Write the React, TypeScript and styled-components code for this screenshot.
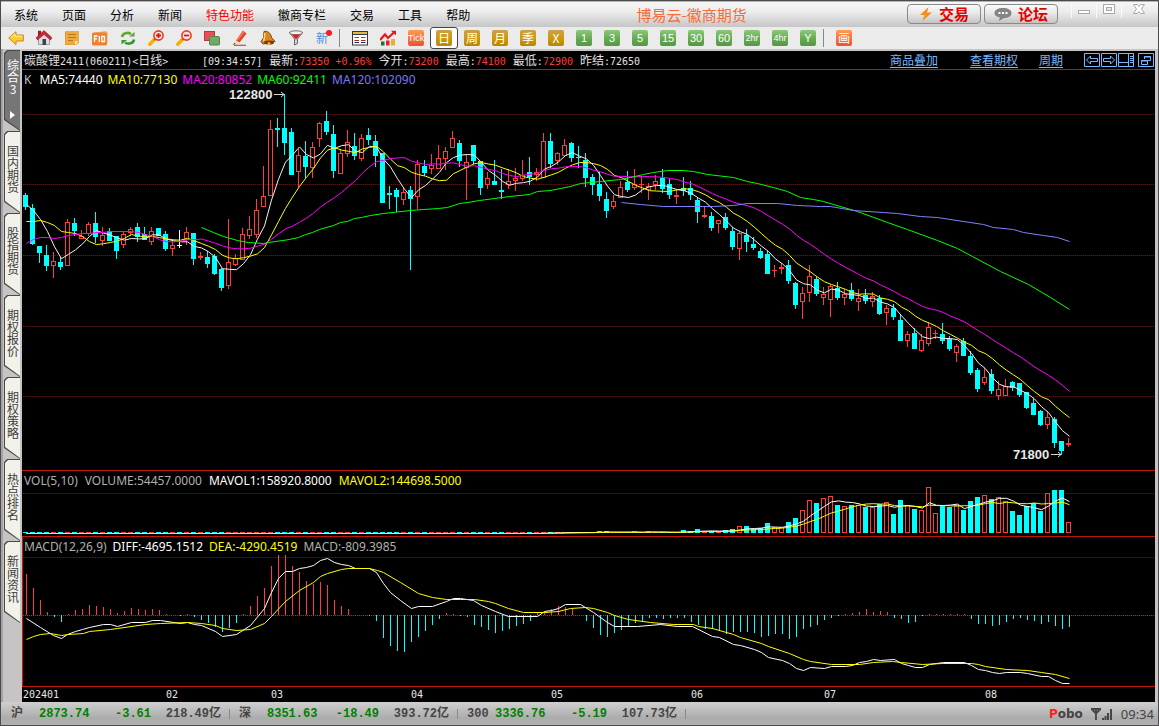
import React from "react";
import styled, { createGlobalStyle, css } from "styled-components";

const CJK = '"Noto Sans CJK SC", sans-serif';
const MONO = '"DejaVu Sans Mono", "Noto Sans CJK SC", monospace';
const RED = "#ff3c3c";
const CYAN = "#00ffff";
const RULE = "#c01808";

const Global = createGlobalStyle`
  * { box-sizing: border-box; }
  body { margin: 0; background: #c8c4c4; font: 12px/16px ${CJK}; color: #000; }
  button { font: inherit; color: inherit; border: 0; padding: 0; margin: 0; background: none; cursor: pointer; }
  a { color: inherit; }
`;

/* ---------- market data (vertical chart units) ---------- */

// kind, body top, body bottom, high, low
const CANDLES = `
c195,207,193,210 c208,244,204,245 c246,253,246,263 c255,266,245,271 r261,266,252,278 c262,267,257,270 r222,266,219,266
c223,231,218,236 r236,239,230,239 r224,234,222,236 c223,237,212,243 r235,241,227,246 c231,241,228,241 c236,251,236,259
r234,245,232,248 r229,233,227,236 c227,237,223,242 c234,240,227,240 r231,242,227,245 c228,236,228,236 c234,249,231,251
r245,249,240,256 w245,246,230,248 r232,240,227,245 c233,259,233,265 r256,258,252,260 c257,264,251,268 c256,274,254,275
c269,288,268,291 r262,286,219,289 r258,265,254,266 r234,260,228,260 r229,236,216,239 r210,235,199,238 r196,207,166,207
r129,196,120,196 c128,130,118,147 c128,143,94,155 c132,175,128,175 r155,172,149,187 c156,167,141,178 r147,168,142,178
r123,139,122,147 c121,132,111,135 c134,171,125,178 r153,174,149,174 r142,154,130,157 c146,156,133,160 r138,159,134,161
c135,140,128,145 c141,156,135,167 c153,203,153,203 c193,195,186,209 c190,197,188,212 r192,200,188,205 c190,199,186,270
r164,197,160,209 c166,173,160,176 r165,169,154,174 r158,169,145,169 r151,159,147,170 r138,148,131,148 c143,161,140,167
r162,168,155,200 c145,161,145,164 c161,188,161,195 r178,185,172,189 c181,185,160,185 c190,192,169,199 r181,185,169,189
r178,181,168,191 r175,179,160,181 c172,177,157,185 r172,175,168,181 r141,178,133,178 c141,164,133,168 r153,161,152,165
r145,156,139,156 c143,158,142,162 c157,158,146,168 c160,178,153,187 c177,185,174,195 c184,196,172,201 c199,211,192,218
r201,207,195,209 r187,198,181,198 c182,190,171,192 r184,188,169,190 r184,185,176,193 r186,190,183,200 r181,185,175,190
c178,189,169,193 c184,195,179,199 r195,197,189,204 c188,191,177,196 c188,195,181,200 c200,212,197,223 r215,217,207,218
c216,228,212,231 r220,224,220,233 c217,228,213,230 c231,247,227,250 r233,249,231,260 c235,242,229,252 c244,248,237,250
c251,258,248,259 c254,274,251,274 r270,271,265,277 r267,269,263,274 c265,281,260,284 c283,305,282,309 r293,302,287,319
r276,293,265,302 c279,294,277,296 r294,298,287,305 r286,300,284,317 c288,298,282,300 r294,298,289,305 c290,299,283,301
r298,302,289,311 c295,301,289,304 r296,302,292,307 c298,314,295,315 r308,313,305,325 c308,317,304,320 c320,341,314,341
r334,341,331,347 c333,349,328,349 r340,351,334,352 r327,344,322,346 r333,334,330,339 c334,341,323,344 c339,349,336,351
r346,353,344,362 c341,356,338,356 c356,373,351,375 c370,389,368,392 r377,383,368,385 c374,391,369,394 r389,396,381,400
r386,396,379,396 c382,388,381,391 c383,395,383,397 c392,408,392,409 c403,415,398,415 c411,425,410,426 r417,425,412,429
c419,443,417,448 c441,451,441,455 r443,445,438,447`
  .trim()
  .split(/\s+/)
  .map((s) => {
    const [top, bottom, high, low] = s.slice(1).split(",").map(Number);
    return { kind: s[0], top, bottom, high, low };
  });

// bar heights of the traded volume for the most recent bars
const VOLUME_TAIL = [
  1, 1, 1, 1, 1, 1, 1, 1, 2, 2, 1, 1, 1, 2, 1, 2, 1, 1, 1, 1, 3, 2, 4, 2, 2, 2, 3, 4, 7, 7, 4, 5, 10, 6, 6, 11, 15,
  23, 33, 30, 35, 37, 28, 27, 28, 28, 26, 26, 29, 31, 19, 33, 28, 24, 23, 46, 20, 27, 26, 28, 23, 32, 36, 38, 34, 36,
  32, 22, 18, 27, 30, 22, 40, 43, 43, 11,
];
const VOLUME = [...Array(CANDLES.length - VOLUME_TAIL.length).fill(0), ...VOLUME_TAIL];

// end of each histogram bar; the zero line is at 615
const MACD_BARS = [
  574, 588, 600, 612, 617, 622, 614, 610, 609, 605, 606, 607, 609, 613, 611, 608, 609, 610, 609, 610, 614, 615, 616,
  614, 617, 620, 623, 627, 632, 628, 623, 614, 606, 596, 588, 566, 555, 555, 566, 572, 581, 584, 582, 585, 600, 606,
  609, 615, 615, 616, 621, 638, 646, 651, 652, 642, 637, 631, 625, 619, 613, 614, 616, 617, 625, 627, 630, 633, 631,
  629, 626, 624, 621, 612, 612, 609, 606, 607, 609, 615, 621, 628, 635, 637, 633, 630, 626, 623, 621, 618, 618, 619,
  618, 618, 618, 622, 625, 629, 629, 631, 634, 632, 632, 632, 633, 637, 636, 634, 634, 639, 637, 629, 627, 625, 620,
  618, 616, 614, 613, 612, 609, 612, 611, 612, 618, 619, 623, 622, 616, 614, 614, 614, 614, 614, 614, 619, 624, 624,
  626, 625, 622, 619, 618, 620, 621, 624, 622, 626, 629, 627,
];

const DIFF =
  "26,618 40,627 53,635 61,638 67,634 75,631 82,629 89,627 103,624 110,624 117,626 131,622 145,622 152,620 160,620 180,623 187,622 194,624 201,625 215,631 222,636 236,634 250,625 264,608 271,592 278,578 285,571 292,571 299,568 306,567 313,565 320,560 327,558 334,562 341,564 348,565 355,568 369,568 376,572 383,583 390,592 400,600 411,608 418,606 432,606 446,601 453,598 460,598 473,600 481,605 495,611 508,616 537,616 544,611 551,610 558,608 565,604 580,604 593,612 607,622 614,626 637,626 660,624 677,626 692,626 712,636 719,637 733,644 740,645 754,649 761,652 768,657 782,660 789,663 796,668 803,670 810,667 824,668 831,666 845,666 852,665 859,662 866,661 873,659 880,660 894,659 901,663 908,665 915,667 922,667 929,664 943,662 964,662 971,665 978,669 985,670 992,672 999,673 1006,672 1020,672 1027,673 1041,676 1048,676 1055,680 1062,683 1069,683";
const DEA =
  "26,639 33,636 40,634 50,633 61,635 68,634 83,633 89,631 110,629 117,628 145,624 160,623 187,622 201,623 215,625 222,628 236,630 250,629 264,623 271,616 285,601 299,590 313,582 320,576 327,573 341,569 348,568 369,568 377,570 383,572 400,582 418,593 432,597 446,599 460,599 474,599 488,601 495,603 508,608 523,612 544,612 558,611 570,608 585,607 593,608 607,612 614,615 628,619 650,622 673,624 693,624 698,626 712,628 733,634 740,637 761,643 768,646 789,653 803,659 810,661 831,664 859,664 873,662 892,661 901,662 922,664 942,663 971,663 978,664 985,666 1006,669 1027,670 1041,672 1055,674 1069,678";
const MA60 =
  "201,227 213,232 223,236 237,240 248,242 263,243 268,242 289,239 298,237 305,234 312,232 319,229 333,225 340,222 347,221 354,218 361,217 370,215 383,213 410,210 423,209 438,208 447,207 459,203 467,202 479,200 494,198 509,196 529,194 537,191 550,190 560,188 570,186 580,183 600,181 620,179 630,177 643,174 653,172 667,170 683,170 693,171 707,174 733,177 747,181 757,183 773,187 787,191 800,197 813,199 823,201 833,204 857,211 887,222 907,229 937,240 957,248 972,256 1000,271 1028,284 1050,297 1069,309";
const MA120 =
  "621,202 640,204 663,206 713,206 733,205 747,203 777,203 797,205 820,206 830,206 853,210 897,213 920,216 937,217 963,221 983,224 993,227 1013,229 1023,232 1043,235 1057,237 1069,241";

const CLOSES = CANDLES.map((c) => (c.kind === "c" ? c.bottom : c.top));

// moving average; `lead` holds the values of the bars before a full window exists
const average = (values: number[], n: number, lead: number[] = []) =>
  values.map((_, i) => {
    if (i < n - 1) return lead[i] ?? values[i];
    return values.slice(i - n + 1, i + 1).reduce((a, b) => a + b, 0) / n;
  });

const toPoints = (values: number[]) => values.map((v, i) => `${26 + i * 7},${v.toFixed(1)}`).join(" ");

const MA5 = toPoints(average(CLOSES, 5, [204, 210, 219, 231]));
const MA10 = toPoints(average(CLOSES, 10, [221, 221, 220, 222, 225, 231, 232, 233, 236]));
const MA20 = toPoints(
  average(CLOSES, 20, [243, 239, 237, 237, 238, 237, 235, 234, 233, 233, 232, 232, 231, 231, 231, 231, 232, 234, 236])
);
const volumeLine = (n: number) => toPoints(average(VOLUME, n, VOLUME.slice(0, n)).map((v) => 533 - v));

/* ---------- frame ---------- */

const Shell = styled.div`
  border: 1px solid #4c4a4c;
  background: #c8c4c4;
  overflow: hidden;
`;

const TitleBar = styled.header`
  display: grid;
  grid-template-columns: auto 1fr auto;
  align-items: center;
  height: 26px;
  border-top: 1px solid #b4b4b4;
  background: linear-gradient(#f6f6f6, #ececec 40%, #c6c6c6);
`;

const Menu = styled.nav`
  display: flex;
  gap: 24px;
  padding-left: 13px;
`;

const MenuButton = styled.button<{ $hot?: boolean }>`
  white-space: nowrap;
  line-height: 18px;
  color: ${(p) => (p.$hot ? "#ff0000" : "#000")};
`;

const AppName = styled.h1`
  margin: 0 0 0 6px;
  font-size: 15px;
  line-height: 20px;
  font-weight: 400;
  color: #f26c3c;
  text-align: center;
  white-space: nowrap;
`;

const TitleTools = styled.div`
  display: flex;
  align-self: start;
  gap: 3px;
  padding-right: 3px;
`;

const PillButton = styled.button`
  display: flex;
  align-items: center;
  justify-content: center;
  gap: 6px;
  width: 74px;
  height: 20px;
  margin-top: 2px;
  border: 1px solid #8a8a8a;
  border-radius: 4px;
  background: linear-gradient(#fafafa, #e8e8e8 45%, #c4c4c4);
  color: #e00000;
  font-size: 15px;
  line-height: 18px;
  font-weight: 700;
`;

const WindowButtons = styled.div`
  display: flex;
  margin-left: 10px;
`;

const WindowButton = styled.button<{ $wide?: boolean }>`
  display: grid;
  place-items: center;
  width: ${(p) => (p.$wide ? 34 : 25)}px;
  height: 16px;
  padding-bottom: 2px;
  border-left: 1px solid #fafafa;
`;

const ToolBar = styled.div`
  display: flex;
  align-items: center;
  height: 22px;
  padding-left: 1px;
  background: #ebebeb;
`;

const ToolButton = styled.button<{ $active?: boolean }>`
  display: grid;
  place-items: center;
  width: 28px;
  height: 22px;
  ${(p) =>
    p.$active &&
    css`
      border: 1px solid #444;
      border-radius: 3px;
      background: #fff;
    `}
`;

const Divider = styled.span`
  flex: none;
  width: 8px;
  height: 18px;
  background: linear-gradient(#888, #888) 1px 0 / 1px 100% no-repeat;
`;

type Tone = "gold" | "green" | "orange";
const TONES: Record<Tone, string> = {
  gold: "linear-gradient(#c8a050, #d09a08 50%, #b88600)",
  green: "linear-gradient(#8cc878, #62a850 60%, #559845)",
  orange: "linear-gradient(#ff9c50, #f0502c)",
};

const Tile = styled.span<{ $tone: Tone; $small?: boolean }>`
  display: grid;
  place-items: center;
  width: 16px;
  height: 16px;
  border-radius: 2px;
  background: ${(p) => TONES[p.$tone]};
  color: #fff;
  font: ${(p) =>
    p.$small
      ? '9px/16px "Liberation Sans", sans-serif'
      : p.$tone === "green"
        ? '11px/16px "Liberation Sans", sans-serif'
        : `12px/16px ${CJK}`};
`;

const Workspace = styled.main`
  display: flex;
  padding: 2px 3px 0 0;
  border-left: 2px solid #a4a2a4;
`;

/* ---------- side tabs ---------- */

const SideTabs = styled.nav`
  display: flex;
  flex-direction: column;
  flex: none;
  width: 19px;
  margin-top: -1px;
  padding-left: 1px;
  padding-right: 2px;
`;

const tabShape = "polygon(0 3px, 3px 0, 100% 0, 100% 100%, 0 calc(100% - 11px))";

const SideTab = styled.button<{ $active?: boolean }>`
  position: relative;
  z-index: 0;
  display: flex;
  flex-direction: column;
  align-items: center;
  gap: 16px;
  height: ${(p) => (p.$active ? 81 : 82)}px;
  padding: ${(p) => (p.$active ? "9px 0 0 1px" : "14px 0 0 1px")};
  clip-path: ${tabShape};
  background: #484848;
  color: ${(p) => (p.$active ? "#fff" : "#3c3c3c")};
  &::before {
    content: "";
    position: absolute;
    z-index: -1;
    inset: 1px 0 1px 1px;
    clip-path: ${tabShape};
    background: ${(p) => (p.$active ? "#767676" : "#f2f1ea")};
  }
`;

const TabText = styled.span`
  writing-mode: vertical-rl;
  text-orientation: upright;
  font-size: 12px;
  line-height: 14px;
`;

const TabArrow = styled.span`
  border: 4px solid transparent;
  border-left: 5px solid #fff;
  border-right: 0;
`;

/* ---------- chart area ---------- */

const Charts = styled.section`
  flex: 1;
  min-width: 0;
  background: #000;
  color: #e0e0e0;
`;

const QuoteBar = styled.div`
  display: flex;
  align-items: center;
  justify-content: space-between;
  height: 19px;
  padding: 0 1px 0 2px;
  border-bottom: 1px solid ${RULE};
  white-space: nowrap;
`;

const Figures = styled.div`
  display: flex;
  align-items: baseline;
  gap: 7px;
  line-height: 18px;
`;

const Instrument = styled.span`
  width: 171px;
`;

const Num = styled.span<{ $up?: boolean }>`
  font: 10px/16px ${MONO};
  color: ${(p) => (p.$up ? RED : "inherit")};
`;

const Links = styled.div`
  display: flex;
  align-items: center;
  color: #78b8ff;
`;

const TextLink = styled.a<{ $gap: number }>`
  margin-right: ${(p) => p.$gap}px;
  text-underline-offset: 2px;
`;

const PaneButton = styled.button<{ $apart?: boolean }>`
  display: block;
  width: 16px;
  height: 14px;
  margin-left: ${(p) => (p.$apart ? 4 : 1)}px;
`;

const Panel = styled.div<{ $edge?: boolean }>`
  border-bottom: 1px solid ${RULE};
  box-shadow: ${(p) => (p.$edge ? `inset 1px 0 ${RULE}` : "none")};
`;

const Legend = styled.div<{ $height: number; $gap: number }>`
  display: flex;
  gap: ${(p) => p.$gap}px;
  height: ${(p) => p.$height}px;
  padding-left: 2px;
  font: 12px/20px "Noto Sans", sans-serif;
  white-space: nowrap;
`;

const LegendItem = styled.span<{ $color: string }>`
  color: ${(p) => p.$color};
`;

const Plot = styled.svg`
  display: block;
  width: 100%;
  text {
    fill: #e8e8e8;
  }
`;

/* ---------- status bar ---------- */

const StatusBar = styled.footer`
  display: flex;
  align-items: center;
  justify-content: space-between;
  height: 23px;
  padding: 1px 4px 0 10px;
  background: linear-gradient(#cfcfcf, #acacac 70%, #b0b0b0);
  color: #444;
`;

const Indices = styled.div`
  display: flex;
`;

const Index = styled.div`
  display: grid;
  grid-template-columns: 28px 49px 63px 70px;
  align-items: center;
  width: 228px;
  font: 700 12px/20px "Liberation Mono", "Noto Sans CJK SC", monospace;
  background: linear-gradient(#888, #888) 218px 5px / 1px 10px no-repeat;
`;

const IndexCell = styled.span<{ $down?: boolean; $right?: boolean }>`
  color: ${(p) => (p.$down ? "#008000" : "inherit")};
  text-align: ${(p) => (p.$right ? "right" : "left")};
`;

const StatusRight = styled.div`
  display: flex;
  align-items: center;
  gap: 8px;
  font: 13px/20px "Noto Sans", sans-serif;
`;

const Brand = styled.b`
  font: 700 12px/20px "DejaVu Sans", sans-serif;
  span {
    color: #ff2020;
  }
`;

/* ---------- drawings ---------- */

const Icon = ({ children, w = 16, h = 16 }: { children: React.ReactNode; w?: number; h?: number }) => (
  <svg width={w} height={h} viewBox={`0 0 ${w} ${h}`} aria-hidden="true">
    {children}
  </svg>
);

const Lens = ({ plus }: { plus?: boolean }) => (
  <Icon>
    <path d="M1.800 14.200 6 10" stroke="#f8b000" strokeWidth="3.600" strokeLinecap="round" />
    <path d="M6 10l1.600-1.600" stroke="#e05030" strokeWidth="2" />
    <circle cx="10.500" cy="5.500" r="4.600" fill="#ffe8e0" stroke="#e83c28" strokeWidth="1.600" />
    <path d={plus ? "M8 5.500h5M10.500 3v5" : "M8 5.500h5"} stroke="#d81818" strokeWidth="1.800" />
  </Icon>
);

const leftTools: [string, React.ReactNode][] = [
  [
    "后退",
    <Icon>
      <path d="M.7 8 8 1.700V5h7.300v6H8v3.600z" fill="#ffcc30" stroke="#c88a10" />
      <path d="M3 7.500 7 4v2.200h7" stroke="#fff0a0" fill="none" />
    </Icon>,
  ],
  [
    "首页",
    <Icon>
      <path d="M2.500 8v6.500h11V8L8 3.500z" fill="#dcdce2" stroke="#9a9aa2" />
      <path d="M2 .8h3v5H2z" fill="#a01818" />
      <path d="M8 .5 16 7.700 14.500 10 8 4.500 1.500 10 0 7.700z" fill="#c82838" stroke="#901020" strokeWidth=".5" />
      <path d="M6.500 9h3.500v6H6.500z" fill="#404048" />
    </Icon>,
  ],
  [
    "资讯",
    <Icon>
      <path d="M2 1h13v11.500L12 15H1V2z" fill="#dc9020" />
      <path d="M2 1h13v10l-3 3.500H1z" fill="#eeaa40" />
      <path d="M4 4.500h8M4 7.500h8M4 10.500h5" stroke="#b87818" />
      <path d="M11 15v-3.500h3.500z" fill="#fff0c0" />
    </Icon>,
  ],
  [
    "F10",
    <Icon>
      <path d="M1 3l12-2 2.500 1v11l-13 2z" fill="#f0b070" />
      <rect y="2.500" width="15" height="13" rx="1.500" fill="#f08030" />
      <path d="M2.500 12V6h3M2.500 8.800h2.500M7.300 6v6M9.800 6.500h2.700v5H9.800z" stroke="#fff" strokeWidth="1.300" fill="none" />
    </Icon>,
  ],
  [
    "刷新",
    <Icon>
      <path d="M2 7C2.500 2.800 8 2 11 4" fill="none" stroke="#60a830" strokeWidth="2.600" />
      <path d="M9 6.500h5.500V2z" fill="#60a830" />
      <path d="M14 9.500c-.5 4.200-6 5-9 3" fill="none" stroke="#389838" strokeWidth="2.600" />
      <path d="M7 10H1.500v4.500z" fill="#389838" />
    </Icon>,
  ],
  ["放大", <Lens plus />],
  ["缩小", <Lens />],
  [
    "叠加",
    <Icon>
      <rect x=".5" y="1.500" width="10" height="9" fill="#e85058" stroke="#b83840" />
      <rect x="5.500" y="6.500" width="10" height="8.500" rx="1" fill="#70a868" stroke="#508848" />
    </Icon>,
  ],
  [
    "画笔",
    <Icon>
      <path d="M4 10.500 11 .5 14.500 3.500 7.500 12.500z" fill="#e84020" />
      <path d="M5.500 10 12 1.500" stroke="#ff9080" strokeWidth="1.200" />
      <path d="M4 10.500 1 15 7.500 12.500z" fill="#f8d8a0" />
      <path d="M1 15l1.200-2 1.500 1z" fill="#403020" />
      <path d="M2 15.300h12" stroke="#e04030" strokeWidth="1.200" />
    </Icon>,
  ],
  [
    "预警",
    <Icon>
      <path d="M4 1.500C7 .5 11 3 11.500 7.500L15 11.500 3 14 1 11.500 3.500 8z" fill="#d88820" stroke="#7a4010" />
      <path d="M5 3c-1 3 0 5-1.500 8" stroke="#ffd878" strokeWidth="1.500" fill="none" />
      <ellipse cx="9" cy="12.500" rx="5" ry="2" fill="#7a3808" />
      <circle cx="9" cy="13.500" r="1.500" fill="#f0b030" />
    </Icon>,
  ],
  [
    "筛选",
    <Icon>
      <path d="M1.500 2.500 6.500 9v6l3-1.500V9l5-6.500z" fill="#d0d0d4" stroke="#68686c" />
      <ellipse cx="8" cy="2.800" rx="6.500" ry="2" fill="#f0f0f0" stroke="#707074" />
      <path d="M4 4.500h8L8 9.500z" fill="#e01818" />
    </Icon>,
  ],
  [
    "新闻快讯",
    <Icon h={18}>
      <text x="0" y="14" fontSize="12" fontFamily={CJK} fill="#4a90e0">
        新
      </text>
      <circle cx="13" cy="4" r="3" fill="#ff1818" />
    </Icon>,
  ],
];

const TableIcon = (
  <Icon>
    <rect x=".5" y="1.500" width="15" height="13.500" fill="#fff" stroke="#303840" />
    <path d="M1 2h14v2.500H1z" fill="#e8b838" />
    <path d="M1 4.500h14" stroke="#303840" />
    <path d="M2.500 7.500h4.500M9 7.500h4.500" stroke="#208030" />
    <path d="M2.500 10.500h4.500M9 10.500h4.500" stroke="#c82020" />
    <path d="M2.500 12.500h4.500M9 12.500h4.500" stroke="#203060" />
  </Icon>
);

const TrendIcon = (
  <Icon>
    <path d="M1 15.500v-4h3.500v4z" fill="#207030" />
    <path d="M6 15.500v-5h3.500v5z" fill="#e82020" />
    <path d="M11 15.500V9h4v6.500z" fill="#e8b030" />
    <path d="M0 10 5 4.500 8 8l6.500-6" fill="none" stroke="#e81818" strokeWidth="2.200" />
    <path d="M11 .8h5v4.700z" fill="#e81818" />
  </Icon>
);

const menus = ["系统", "页面", "分析", "新闻", "特色功能", "徽商专栏", "交易", "工具", "帮助"];
const goldPeriods = ["日", "周", "月", "季", "X"];
const greenPeriods = ["1", "3", "5", "15", "30", "60", "2hr", "4hr", "Y"];
const tabs = ["国内期货", "股指期货", "期权报价", "期权策略", "热点排名", "新闻资讯"];

const quote: [string, string, boolean][] = [
  ["今开", "73200", true],
  ["最高", "74100", true],
  ["最低", "72900", true],
  ["昨结", "72650", false],
];

const indices = [
  ["沪", "2873.74", "-3.61", "218.49亿"],
  ["深", "8351.63", "-18.49", "393.72亿"],
  ["300", "3336.76", "-5.19", "107.73亿"],
];

const months: [number, string][] = [
  [23, "202401"],
  [166, "02"],
  [271, "03"],
  [411, "04"],
  [551, "05"],
  [691, "06"],
  [824, "07"],
  [985, "08"],
];

/* ---------- chart pieces ---------- */

// Shifts chart units so that the plot starts at the given top edge.
const Units = ({ top, children }: { top: number; children: React.ReactNode }) => (
  <g transform={`translate(-22 ${-top})`} shapeRendering="crispEdges">
    {children}
  </g>
);

const Grid = ({ y, color = "#8c0000" }: { y: number; color?: string }) => (
  <line x1="23" x2="110%" y1={y + 0.5} y2={y + 0.5} stroke={color} strokeDasharray="1 1" />
);

const Curve = ({ points, color }: { points: string; color: string }) => (
  <polyline points={points} fill="none" stroke={color} shapeRendering="auto" transform="translate(.5 .5)" />
);

const Candle = ({ i, c }: { i: number; c: (typeof CANDLES)[number] }) => {
  const x = 23 + i * 7;
  const color = c.kind === "c" ? CYAN : c.kind === "r" ? RED : "#fff";
  const hollow = c.kind === "r" && c.bottom - c.top > 2;
  return (
    <g>
      <rect x={x + 2} y={c.high} width="1" height={c.top - c.high} fill={color} />
      <rect x={x + 2} y={c.bottom} width="1" height={c.low - c.bottom} fill={color} />
      {hollow ? (
        <rect x={x + 0.5} y={c.top + 0.5} width="4" height={c.bottom - c.top - 1} fill="none" stroke={color} />
      ) : (
        <rect x={x} y={c.top} width="5" height={c.bottom - c.top} fill={color} />
      )}
    </g>
  );
};

const VolumeBar = ({ i, h }: { i: number; h: number }) => {
  const x = 23 + i * 7;
  const up = CANDLES[i].kind === "r";
  const height = Math.max(1, h);
  return up && height > 2 ? (
    <rect x={x + 0.5} y={533.5 - height} width="4" height={height - 1} fill="none" stroke={RED} />
  ) : (
    <rect x={x} y={533 - height} width="5" height={height} fill={up ? RED : CYAN} />
  );
};

const Marker = ({ x, y, tip, children }: { x: number; y: number; tip: number; children: string }) => (
  <g shapeRendering="auto">
    <text x={x} y={y + 5} fontSize="13" fontWeight="700" fontFamily='"Liberation Sans", sans-serif'>
      {children}
    </text>
    <path d={`M${tip - 11} ${y + 0.5}h10M${tip - 4} ${y - 2}l3 2.500-3 2.500`} fill="none" stroke="#d8d8d8" />
  </g>
);

export default function App() {
  return (
    <>
      <Global />
      <Shell>
        <TitleBar>
          <Menu aria-label="主菜单">
            {menus.map((m) => (
              <MenuButton key={m} $hot={m === "特色功能"}>
                {m}
              </MenuButton>
            ))}
          </Menu>
          <AppName>博易云-徽商期货</AppName>
          <TitleTools>
            <PillButton>
              <Icon w={14} h={14}>
                <path d="M9.500 0 1 8h4.500L3.500 14 13 5.500H8z" fill="#f09020" />
              </Icon>
              交易
            </PillButton>
            <PillButton>
              <Icon w={18} h={14}>
                <path d="M9 1c5 0 8.500 2 8.500 5s-3 5-7.500 5L5 14l.8-3.500C2.500 9.800.5 8.500.5 6 .5 3 4 1 9 1z" fill="#848484" />
                <path d="M4.500 5h2v2h-2zM8 5h2v2H8zM11.500 5h2v2h-2z" fill="#fff" />
              </Icon>
              论坛
            </PillButton>
            <WindowButtons>
              <WindowButton aria-label="最小化">
                <Icon w={14} h={12}>
                  <rect x="1.500" y="7.500" width="11" height="3" fill="#fff" stroke="#a8a8a8" />
                </Icon>
              </WindowButton>
              <WindowButton aria-label="最大化">
                <Icon w={14} h={12}>
                  <rect x="1.500" y="1.500" width="11" height="9" fill="#fff" stroke="#a8a8a8" />
                  <rect x="4.500" y="4.500" width="5" height="3" fill="#e8e8e8" stroke="#a8a8a8" />
                </Icon>
              </WindowButton>
              <WindowButton $wide aria-label="关闭">
                <Icon w={14} h={12}>
                  <path d="M1.500 1.500h4L7 3.500 8.500 1.500h4L9.500 6l3 4.500h-4L7 8.500 5.500 10.500h-4l3-4.500z" fill="#fff" stroke="#a8a8a8" />
                </Icon>
              </WindowButton>
            </WindowButtons>
          </TitleTools>
        </TitleBar>

        <ToolBar role="toolbar" aria-label="工具栏">
          {leftTools.map(([label, icon]) => (
            <ToolButton key={label} aria-label={label}>
              {icon}
            </ToolButton>
          ))}
          <Divider />
          <ToolButton aria-label="报价表">{TableIcon}</ToolButton>
          <ToolButton aria-label="走势">{TrendIcon}</ToolButton>
          <ToolButton>
            <Tile $tone="orange" $small>
              Tick
            </Tile>
          </ToolButton>
          {goldPeriods.map((p, i) => (
            <ToolButton key={p} $active={i === 0}>
              <Tile $tone="gold">{p}</Tile>
            </ToolButton>
          ))}
          {greenPeriods.map((p) => (
            <ToolButton key={p}>
              <Tile $tone="green" $small={p.endsWith("hr")}>
                {p}
              </Tile>
            </ToolButton>
          ))}
          <Divider />
          <ToolButton aria-label="画线">
            <Tile $tone="orange">画</Tile>
          </ToolButton>
        </ToolBar>

        <Workspace>
          <SideTabs aria-label="页面">
            <SideTab $active>
              <TabText>综合3</TabText>
              <TabArrow />
            </SideTab>
            {tabs.map((t) => (
              <SideTab key={t}>
                <TabText>{t}</TabText>
              </SideTab>
            ))}
          </SideTabs>

          <Charts>
            <QuoteBar>
              <Figures>
                <Instrument>
                  碳酸锂<Num>2411(060211)</Num>
                  <Num>&lt;</Num>日线<Num>&gt;</Num>
                </Instrument>
                <Num>[09:34:57]</Num>
                <span>
                  最新<Num>:</Num>
                  <Num $up>73350 +0.96%</Num>
                </span>
                {quote.map(([label, value, up]) => (
                  <span key={label}>
                    {label}
                    <Num>:</Num>
                    <Num $up={up}>{value}</Num>
                  </span>
                ))}
              </Figures>
              <Links>
                <TextLink href="#overlay" $gap={32}>
                  商品叠加
                </TextLink>
                <TextLink href="#options" $gap={21}>
                  查看期权
                </TextLink>
                <TextLink href="#period" $gap={20}>
                  周期
                </TextLink>
                <PaneButton aria-label="向左">
                  <Icon h={14}>
                    <path d="M.5.5h15v13H.5zM2.500 7l4-4v2.500h7v3h-7V11z" fill="none" stroke="currentColor" />
                  </Icon>
                </PaneButton>
                <PaneButton aria-label="向右">
                  <Icon h={14}>
                    <path d="M.5.5h15v13H.5zM13.500 7l-4-4v2.500h-7v3h7V11z" fill="none" stroke="currentColor" />
                  </Icon>
                </PaneButton>
                <PaneButton aria-label="侧栏">
                  <Icon h={14}>
                    <path d="M.5.5h15v13H.5zM10.500 1v12M1 9.500h9M12 3.500h3M12 5.500h3M12 7.500h3M12 9.500h3" fill="none" stroke="currentColor" />
                  </Icon>
                </PaneButton>
                <PaneButton $apart aria-label="还原">
                  <Icon h={14}>
                    <path d="M.5.5h15v13H.5zM6.500 6V3.500h6v4H10M6 4h7M3.500 7.500h6v4h-6zM3 8h7" fill="none" stroke="currentColor" />
                  </Icon>
                </PaneButton>
              </Links>
            </QuoteBar>

            <Panel>
              <Legend $height={18} $gap={5}>
                <LegendItem $color="#c0c0c0">K&nbsp;</LegendItem>
                <LegendItem $color="#ffffff">MA5:74440</LegendItem>
                <LegendItem $color="#ffff00">MA10:77130</LegendItem>
                <LegendItem $color="#ff00ff">MA20:80852</LegendItem>
                <LegendItem $color="#00ff00">MA60:92411</LegendItem>
                <LegendItem $color="#7878ff">MA120:102090</LegendItem>
              </Legend>
              <Plot height="382" role="img" aria-label="K线图">
                <Units top={88}>
                  {[114, 184, 255, 326, 396].map((y) => (
                    <Grid key={y} y={y} />
                  ))}
                  {CANDLES.map((c, i) => (
                    <Candle key={i} i={i} c={c} />
                  ))}
                  <Curve points={MA5} color="#f4f4f4" />
                  <Curve points={MA10} color="#ffff00" />
                  <Curve points={MA20} color="#ff00ff" />
                  <Curve points={MA60} color="#00ff00" />
                  <Curve points={MA120} color="#8080ff" />
                  <Marker x={229} y={94} tip={285}>
                    122800
                  </Marker>
                  <Marker x={1013} y={454} tip={1062}>
                    71800
                  </Marker>
                </Units>
              </Plot>
            </Panel>

            <Panel>
              <Legend $height={16} $gap={7}>
                <LegendItem $color="#b0b0b0">VOL(5,10)</LegendItem>
                <LegendItem $color="#b0b0b0">VOLUME:54457.0000</LegendItem>
                <LegendItem $color="#ffffff">MAVOL1:158920.8000</LegendItem>
                <LegendItem $color="#ffff00">MAVOL2:144698.5000</LegendItem>
              </Legend>
              <Plot height="49" role="img" aria-label="成交量">
                <Units top={487}>
                  <Grid y={493} />
                  {VOLUME.map((h, i) => (
                    <VolumeBar key={i} i={i} h={h} />
                  ))}
                  <Curve points={volumeLine(5)} color="#ffffff" />
                  <Curve points={volumeLine(10)} color="#ffff00" />
                </Units>
              </Plot>
            </Panel>

            <Panel $edge>
              <Legend $height={18} $gap={6}>
                <LegendItem $color="#b0b0b0">MACD(12,26,9)</LegendItem>
                <LegendItem $color="#ffffff">DIFF:-4695.1512</LegendItem>
                <LegendItem $color="#ffff00">DEA:-4290.4519</LegendItem>
                <LegendItem $color="#b0b0b0">MACD:-809.3985</LegendItem>
              </Legend>
              <Plot height="131" role="img" aria-label="MACD">
                <Units top={555}>
                  <Grid y={557} />
                  <Grid y={615} color="#d01818" />
                  {MACD_BARS.map((y, i) => (
                    <rect
                      key={i}
                      x={26 + i * 7}
                      y={Math.min(y, 615)}
                      width="1"
                      height={Math.abs(y - 615)}
                      fill={y > 615 ? CYAN : RED}
                    />
                  ))}
                  <Curve points={DIFF} color="#ffffff" />
                  <Curve points={DEA} color="#ffff00" />
                </Units>
              </Plot>
            </Panel>

            <Plot height="15" role="img" aria-label="日期">
              <Units top={687}>
                {months.map(([x, label]) => (
                  <text key={label} x={x} y="698" fontSize="10" fontFamily={MONO}>
                    {label}
                  </text>
                ))}
              </Units>
            </Plot>
          </Charts>
        </Workspace>

        <StatusBar>
          <Indices>
            {indices.map(([name, value, change, turnover]) => (
              <Index key={name}>
                <IndexCell>{name}</IndexCell>
                <IndexCell $down>{value}</IndexCell>
                <IndexCell $down $right>
                  {change}
                </IndexCell>
                <IndexCell $right>{turnover}</IndexCell>
              </Index>
            ))}
          </Indices>
          <StatusRight>
            <Brand>
              <span>P</span>obo
            </Brand>
            <Icon w={22} h={12}>
              <path d="M0 1h10M1 1.500 5 5.500 9 1.500M5 1v11" fill="none" stroke="#444" strokeWidth="1.800" />
              <path d="M11 10h2v2h-2zM13.500 8h2v4h-2zM16 5h2v7h-2zM19 1h2v11h-2z" fill="#444" />
            </Icon>
            <time>09:34</time>
          </StatusRight>
        </StatusBar>
      </Shell>
    </>
  );
}
